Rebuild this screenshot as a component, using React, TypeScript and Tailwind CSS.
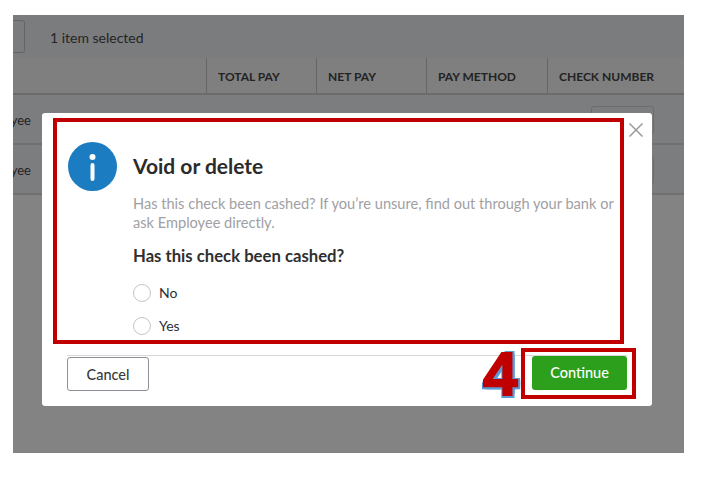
const COLUMNS = [
  { label: "TOTAL PAY", width: "w-[110px]" },
  { label: "NET PAY", width: "w-[110px]" },
  { label: "PAY METHOD", width: "w-[121px]" },
  { label: "CHECK NUMBER", width: "w-[137px]" },
];

function TableRow({ height, action }: { height: string; action: string }) {
  return (
    <div className={`${height} flex items-center justify-between border-b-2 border-[#6f7071] bg-[#7c7d7f]`}>
      <div className="w-[18px] mt-[3px] overflow-hidden flex justify-end text-[13px] text-[#232323]">
        <span className="shrink-0">Employee</span>
      </div>
      <div className={`${action} w-[63px] h-[28px] mr-[30px] border border-[#6b6c6e] rounded-[3px]`} />
    </div>
  );
}

function Radio({ label }: { label: string }) {
  return (
    <label className="flex items-center gap-2 h-[18px] text-[14px] text-[#2a2f3a]">
      <span className="w-[18px] h-[18px] rounded-full border border-[#c4c4ca] bg-white" />
      <span className="-mt-[1px]">{label}</span>
    </label>
  );
}

export default function App() {
  return (
    <div className="w-[702px] h-[477px] bg-white pt-[15px] pl-[13px] font-['Lato','Open_Sans',sans-serif] overflow-hidden">
      <div className="relative w-[671px] h-[438px] bg-[#838383] overflow-hidden">
        <div className="h-[43px] bg-[#7b7c7e] flex items-center gap-[25px]">
          <div className="w-[12px] h-[33px] -mt-[1px] border border-l-0 border-[#636466] rounded-r-[3px]" />
          <span className="text-[14px] text-[#252525] mt-[2px]">1 item selected</span>
        </div>

        <div className="h-[37px] flex bg-[#7f7f7f] border-b-2 border-[#6a6b6c]">
          <div className="w-[193px]" />
          {COLUMNS.map((col) => (
            <div
              key={col.label}
              className={`${col.width} flex items-center pl-[11px] pt-[2px] border-l border-[#656667] text-[12px] font-bold text-[#232323] whitespace-nowrap`}
            >
              {col.label}
            </div>
          ))}
        </div>

        <TableRow height="h-[50px]" action="mt-[1px]" />
        <TableRow height="h-[50px]" action="mt-[1px]" />

        {/* dialog */}
        <div className="absolute left-[29px] top-[98px] w-[610px] h-[293px] bg-white rounded-[3px] px-[25px] text-[#2d2d2d]">
          <div className="flex items-center gap-[16px] pt-[29px]">
            <svg width="49" height="49" viewBox="0 0 49 49" className="shrink-0 ml-[1px]">
              <circle cx="24.5" cy="24.5" r="24.5" fill="#1c7cc2" />
              <circle cx="24.5" cy="15" r="3" fill="#fff" />
              <rect x="22.5" y="21" width="4" height="18" rx="2" fill="#fff" />
            </svg>
            <h2 className="text-[21px] leading-[26px] font-bold text-[#2b2b2b] -mt-[1px]">Void or delete</h2>
          </div>
          <div className="pl-[66px]">
            <p className="mt-[3px] w-[485px] text-[14.6px] leading-[19px] text-[#a0a0a4]">
              Has this check been cashed? If you’re unsure, find out through your bank or ask Employee directly.
            </p>
            <p className="mt-[14px] text-[16.7px] leading-[20px] font-bold text-[#2f2f2f]">Has this check been cashed?</p>
            <div className="mt-[18px] flex flex-col gap-[15px]">
              <Radio label="No" />
              <Radio label="Yes" />
            </div>
          </div>
          <div className="mt-[20px] border-t border-[#d8d8d8] flex justify-between">
            <button className="mt-[1px] w-[82px] h-[34px] pt-[1px] border border-[#8d9096] rounded-[3px] text-[14.5px] font-medium text-[#393a3d]">
              Cancel
            </button>
            <button className="w-[95px] h-[34px] bg-[#2ca01c] rounded-[3px] text-[14.5px] font-medium text-white">
              Continue
            </button>
          </div>

          <button className="absolute left-[587px] top-[10px] text-[#9a9a9a]" aria-label="Close">
            <svg width="14" height="14" viewBox="0 0 14 14" className="block" fill="none" stroke="currentColor" strokeWidth="1.5">
              <path d="M0.5 0.5 13.5 13.5M13.5 0.5 0.5 13.5" />
            </svg>
          </button>

          {/* annotations drawn over the dialog */}
          <div className="absolute left-[11px] top-[5px] w-[571px] h-[226px] border-4 border-[#c00000]" />
          <div className="absolute left-[479px] top-[235px] w-[115px] h-[51px] border-4 border-[#c00000]" />
          <span className="absolute left-[441px] top-[226px] text-[62px] leading-[70px] font-bold text-[#c00000] font-['Liberation_Sans',sans-serif] [-webkit-text-stroke:2px_#c00000] [text-shadow:3px_3px_0_#5b9bd5,3px_-2px_0_#5b9bd5,-2px_3px_0_#5b9bd5,3px_0_0_#5b9bd5,0_3px_0_#5b9bd5]">
            4
          </span>
        </div>
      </div>
    </div>
  );
}
